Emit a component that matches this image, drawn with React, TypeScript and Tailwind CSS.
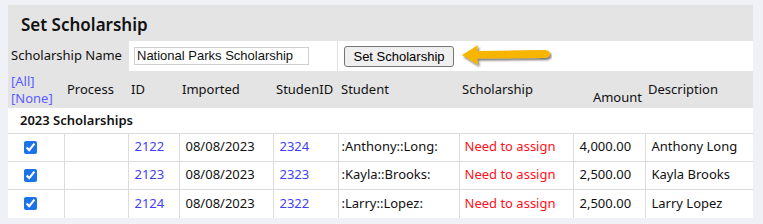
import React from "react";

const rows = [
  { id: "2122", imported: "08/08/2023", sid: "2324", student: ":Anthony::Long:", amount: "4,000.00", desc: "Anthony Long" },
  { id: "2123", imported: "08/08/2023", sid: "2323", student: ":Kayla::Brooks:", amount: "2,500.00", desc: "Kayla Brooks" },
  { id: "2124", imported: "08/08/2023", sid: "2322", student: ":Larry::Lopez:", amount: "2,500.00", desc: "Larry Lopez" },
];

function Arrow() {
  return (
    <svg width="92" height="26" viewBox="0 0 92 26" className="ml-[6px]">
      <defs>
        <filter id="sh" x="-10%" y="-30%" width="130%" height="170%">
          <feDropShadow dx="1.5" dy="2" stdDeviation="1.2" floodColor="#000" floodOpacity="0.55" />
        </filter>
      </defs>
      <path
        d="M2 12 L18 2 L17 8 L85 7 Q90 7.5 90 11 Q90 14.5 85 15 L17 15.5 L18 22 Z"
        fill="#f8b500"
        filter="url(#sh)"
      />
    </svg>
  );
}

export default function App() {
  return (
    <div className="w-[763px] h-[224px] bg-[#f0f1f6] pt-[5px] pl-[8px] font-['Noto_Sans',sans-serif] text-[13px] text-[#111]">
      <div className="w-[745px] bg-white">
        {/* Title */}
        <div className="h-[36px] bg-[#e4e4e4] flex items-center pl-[13px] pt-[3px]">
          <h2 className="text-[17px] font-semibold text-[#111]">Set Scholarship</h2>
        </div>

        {/* Scholarship name row */}
        <div className="h-[30px] flex">
          <div className="w-[121px] bg-[#e4e4e4] flex items-center pl-[3px] whitespace-nowrap">Scholarship Name</div>
          <div className="w-[209px] flex items-center pl-[5px] border-r border-[#e0e0e0]">
            <input
              readOnly
              value="National Parks Scholarship"
              className="w-[175px] h-[18px] border border-[#d0d0d0] px-[2px] text-[13px] font-['Liberation_Sans',sans-serif] outline-none"
            />
          </div>
          <div className="flex items-center pl-[6px]">
            <button className="h-[21px] w-[110px] bg-[#efefef] border border-[#767676] rounded-[3px] text-[13px] font-['Liberation_Sans',sans-serif] text-black">
              Set Scholarship
            </button>
            <Arrow />
          </div>
        </div>

        <table className="w-[745px] border-collapse table-fixed">
          <colgroup>
            <col className="w-[56px]" />
            <col className="w-[64px]" />
            <col className="w-[51px]" />
            <col className="w-[94px]" />
            <col className="w-[65px]" />
            <col className="w-[121px]" />
            <col className="w-[114px]" />
            <col className="w-[72px]" />
            <col className="w-[108px]" />
          </colgroup>
          <thead>
            <tr className="h-[37px] bg-[#e4e4e4] text-left font-normal">
              <th className="font-normal px-[3px] text-[#5b5bff]">
                <div className="leading-[17px] pt-[1px]">[All]</div>
                <div className="leading-[17px]">[None]</div>
              </th>
              <th className="font-normal px-[3px]">Process</th>
              <th className="font-normal px-[3px]">ID</th>
              <th className="font-normal px-[3px]">Imported</th>
              <th className="font-normal px-[3px]">StudenID</th>
              <th className="font-normal px-[3px]">Student</th>
              <th className="font-normal px-[3px]">Scholarship</th>
              <th className="font-normal px-[3px] align-bottom text-right pb-[1px]">Amount</th>
              <th className="font-normal px-[3px]">Description</th>
            </tr>
          </thead>
          <tbody>
            <tr className="h-[25px]">
              <td colSpan={9} className="pl-[12px] font-semibold">2023 Scholarships</td>
            </tr>
            {rows.map((r, i) => (
              <tr key={r.id} className={i < 2 ? "h-[28px] border-t border-[#dcdcdc]" : "h-[29px] border-t border-[#dcdcdc]"}>
                <td className="border-r border-[#dcdcdc] pl-[16px]">
                  <input type="checkbox" defaultChecked className="block w-[13px] h-[13px] accent-[#1a73e8]" />
                </td>
                <td className="border-r border-[#dcdcdc]"></td>
                <td className="border-r border-[#dcdcdc] px-[6px] text-[#3f3ff2]">{r.id}</td>
                <td className="border-r border-[#dcdcdc] px-[6px]">{r.imported}</td>
                <td className="border-r border-[#dcdcdc] px-[6px] text-[#3f3ff2]">{r.sid}</td>
                <td className="border-r border-[#dcdcdc] px-[3px]">{r.student}</td>
                <td className="border-r border-[#dcdcdc] px-[5px] text-[#ff1020]">Need to assign</td>
                <td className="border-r border-[#dcdcdc] px-[6px]">{r.amount}</td>
                <td className="px-[6px]">{r.desc}</td>
              </tr>
            ))}
          </tbody>
        </table>
      </div>
    </div>
  );
}
